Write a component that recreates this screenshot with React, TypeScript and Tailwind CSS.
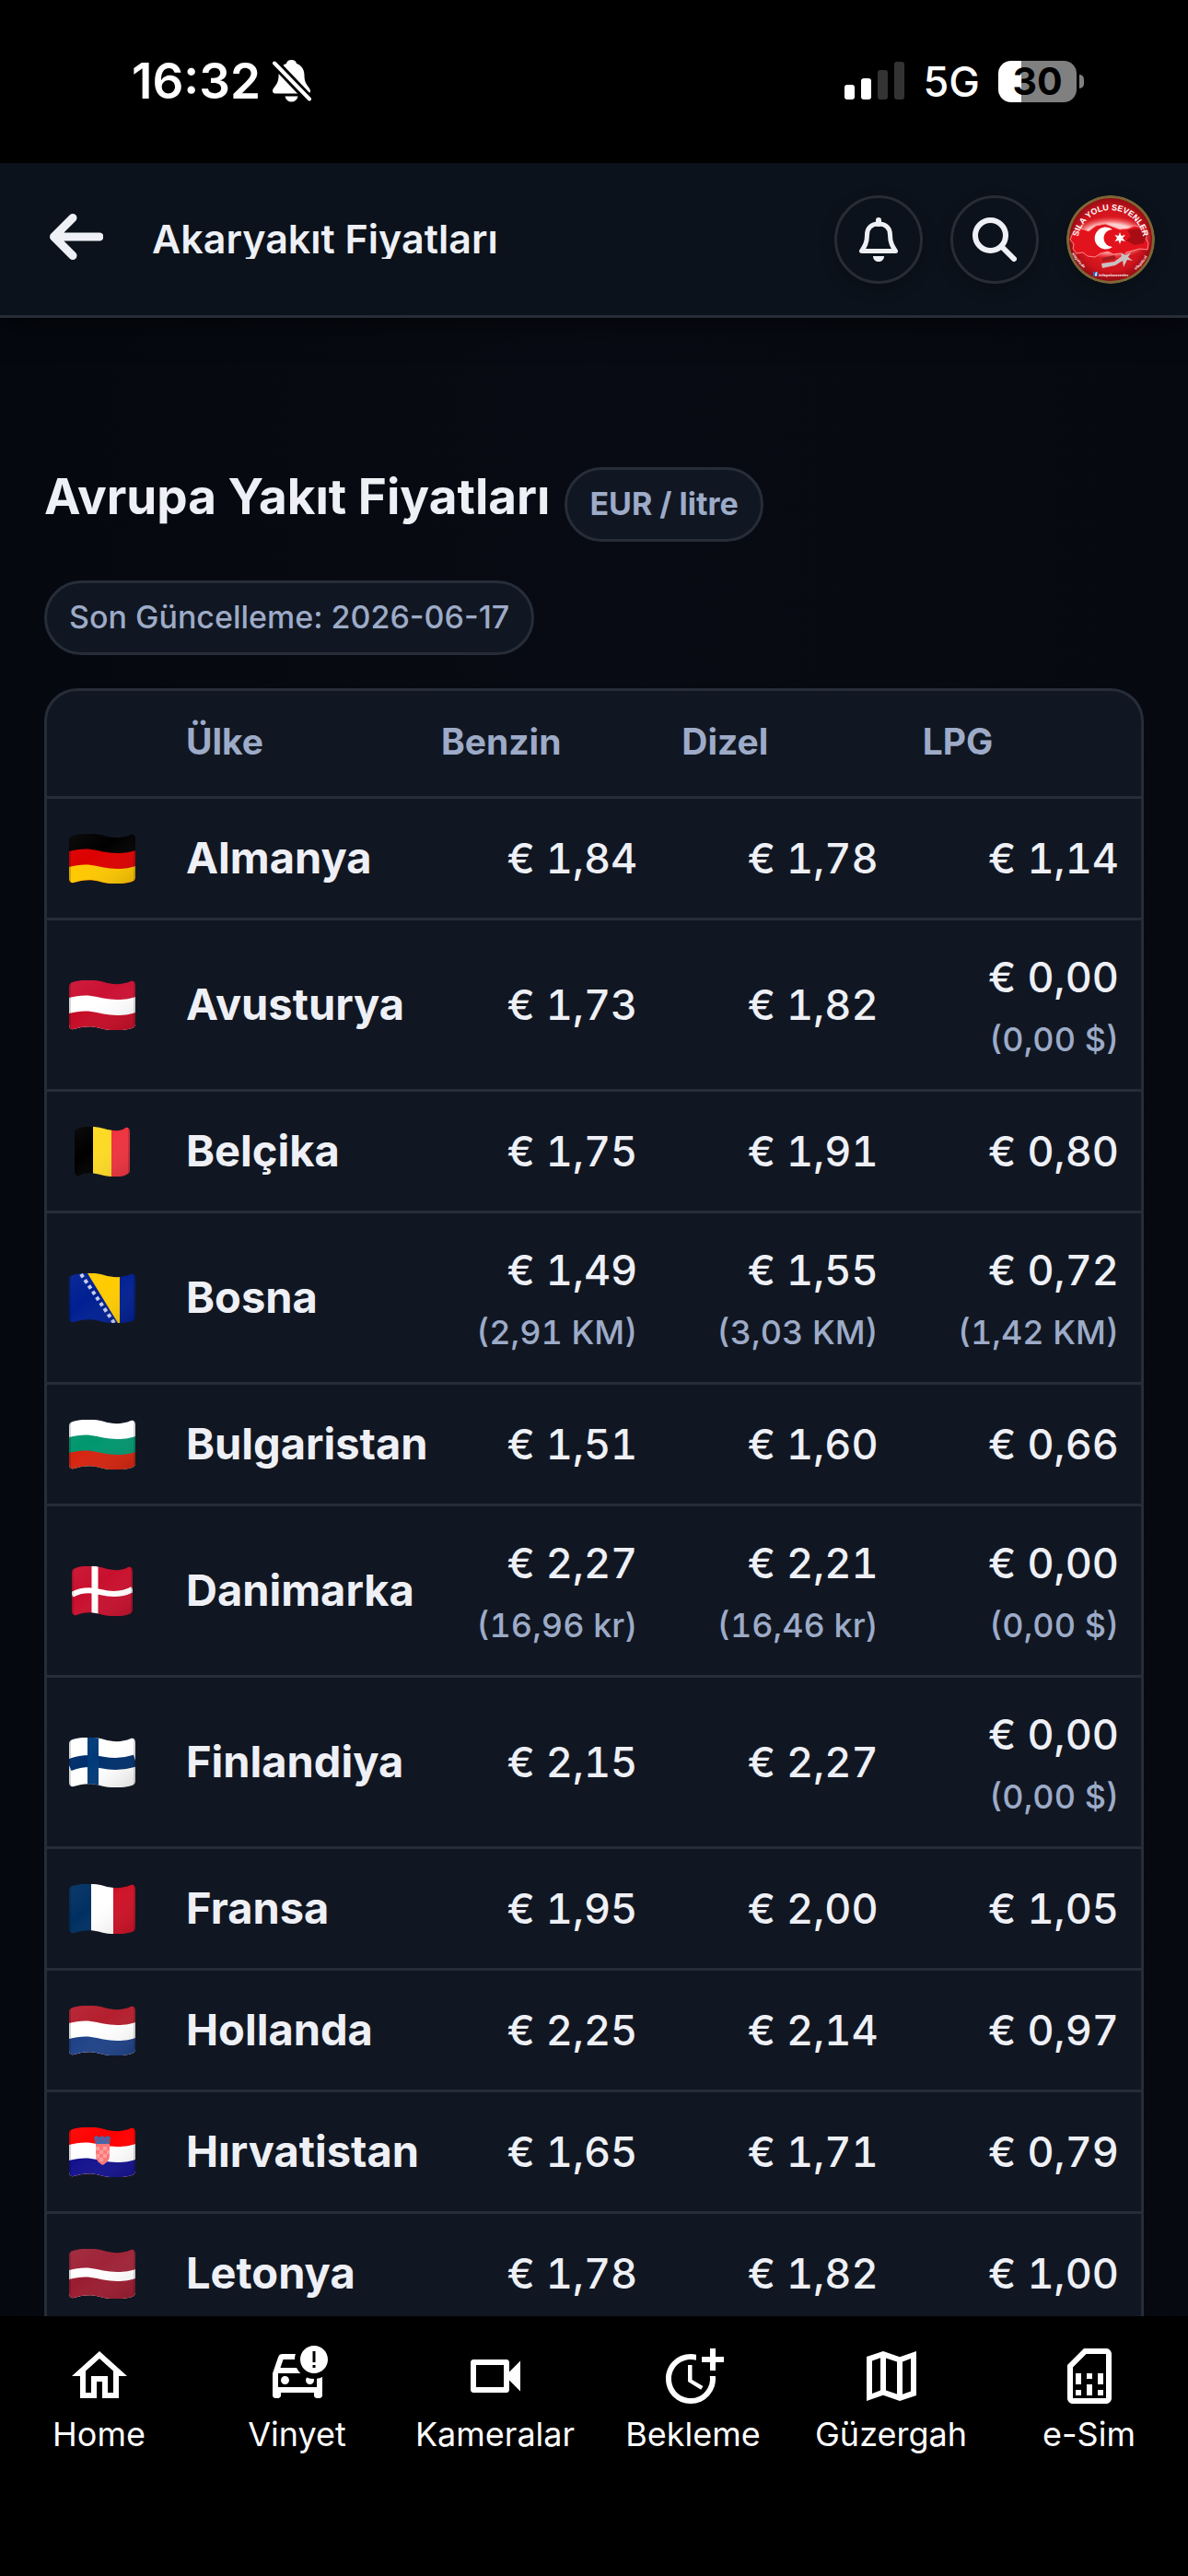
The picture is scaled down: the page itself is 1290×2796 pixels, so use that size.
import React, { useId } from "react";
import {
  MdOutlineCarCrash,
  MdOutlineHome,
  MdOutlineMoreTime,
  MdOutlineSimCard,
  MdOutlineVideocam,
} from "react-icons/md";

type Price = { eur: string; local?: string };
type Row = { flag: string; name: string; prices: [Price, Price, Price] };

const p = (eur: string, local?: string): Price => ({ eur, local });

const rows: Row[] = [
  { flag: "de", name: "Almanya", prices: [p("1,84"), p("1,78"), p("1,14")] },
  { flag: "at", name: "Avusturya", prices: [p("1,73"), p("1,82"), p("0,00", "0,00 $")] },
  { flag: "be", name: "Belçika", prices: [p("1,75"), p("1,91"), p("0,80")] },
  { flag: "ba", name: "Bosna", prices: [p("1,49", "2,91 KM"), p("1,55", "3,03 KM"), p("0,72", "1,42 KM")] },
  { flag: "bg", name: "Bulgaristan", prices: [p("1,51"), p("1,60"), p("0,66")] },
  { flag: "dk", name: "Danimarka", prices: [p("2,27", "16,96 kr"), p("2,21", "16,46 kr"), p("0,00", "0,00 $")] },
  { flag: "fi", name: "Finlandiya", prices: [p("2,15"), p("2,27"), p("0,00", "0,00 $")] },
  { flag: "fr", name: "Fransa", prices: [p("1,95"), p("2,00"), p("1,05")] },
  { flag: "nl", name: "Hollanda", prices: [p("2,25"), p("2,14"), p("0,97")] },
  { flag: "hr", name: "Hırvatistan", prices: [p("1,65"), p("1,71"), p("0,79")] },
  { flag: "lv", name: "Letonya", prices: [p("1,78"), p("1,82"), p("1,00")] },
];

/* A stripe that fills everything below a waving line starting at height y. */
const wave = (y: number) =>
  `M0 ${y}C8 ${y - 2} 16 ${y - 3} 24 ${y - 2}S42 ${y + 2} 52 ${y + 2}S66 ${y + 1} 72 ${y - 1}V60H0Z`;

function Stripes({ colors, stops }: { colors: string[]; stops: number[] }) {
  return (
    <>
      <rect width="72" height="54" fill={colors[0]} />
      {stops.map((y, i) => (
        <path key={y} d={wave(y)} fill={colors[i + 1]} />
      ))}
    </>
  );
}

function FlagArt({ code }: { code: string }) {
  switch (code) {
    case "de":
      return <Stripes colors={["#000000", "#dd0000", "#ffc800"]} stops={[19, 36]} />;
    case "at":
      return <Stripes colors={["#cb1134", "#ffffff", "#c60c26"]} stops={[19, 36]} />;
    case "bg":
      return <Stripes colors={["#ffffff", "#00966e", "#d62410"]} stops={[19, 36]} />;
    case "nl":
      return <Stripes colors={["#b41f2e", "#ffffff", "#1f4288"]} stops={[19, 36]} />;
    case "lv":
      return <Stripes colors={["#9f2438", "#ffffff", "#9b1c30"]} stops={[23, 33]} />;
    case "hr":
      return (
        <>
          <Stripes colors={["#ff0000", "#ffffff", "#14128f"]} stops={[19, 36]} />
          <path d="M29 17h15v14c0 5-4 8-7.500 10-3.500-2-7.500-5-7.500-10z" fill="#ff7676" />
          <path d="M29 21h4v4h-4zM37 21h4v4h-4zM33 25h4v4h-4zM41 25h3v4h-3zM29 29h4v4h-4zM37 29h4v4h-4zM33 33h4v4h-4z" fill="#ff9c9c" />
          <path d="M27 11l3-2 3 2 3-2 3 2 3-2 3 2-1 7H29z" fill="#4665a8" />
          <path d="M30 12h2v3h-2zM36 11h2v3h-2zM41 13h2v3h-2z" fill="#8d4a77" />
        </>
      );
    case "be":
      return (
        <>
          <rect x="6" width="20" height="54" fill="#000000" />
          <rect x="26" width="20" height="54" fill="#fdda24" />
          <rect x="46" width="20" height="54" fill="#ef3340" />
        </>
      );
    case "fr":
      return (
        <>
          <rect width="24" height="54" fill="#003062" />
          <rect x="24" width="24" height="54" fill="#ffffff" />
          <rect x="48" width="24" height="54" fill="#ce1126" />
        </>
      );
    case "ba":
      return (
        <>
          <rect width="72" height="54" fill="#001f92" />
          <path d="M20 0H55V54H53Z" fill="#ffcb00" />
          <path d="M13 1L49 54" stroke="#c3cdea" strokeWidth="4" strokeDasharray="4 3.500" />
        </>
      );
    case "dk":
      return (
        <>
          <rect x="3" width="66" height="54" fill="#c8102e" />
          <path d="M3 31C12 26 22 25 34 28S58 31 69 25" stroke="#ffffff" strokeWidth="6" fill="none" />
          <path d="M28 0V54" stroke="#ffffff" strokeWidth="7" />
        </>
      );
    default:
      return (
        <>
          <rect width="72" height="54" fill="#ffffff" />
          <path d="M0 30C12 25 22 24 36 27S60 29 72 25" stroke="#002f6c" strokeWidth="13" fill="none" />
          <path d="M26 0V54" stroke="#003a78" strokeWidth="12" />
        </>
      );
  }
}

function Flag({ code, label }: { code: string; label: string }) {
  const id = useId();
  const x0 = code === "be" ? 6 : code === "dk" ? 3 : 0;
  const x1 = 72 - x0;
  return (
    <svg viewBox="0 0 72 54" className="h-[54px] w-[72px]" role="img" aria-label={label}>
      <defs>
        <clipPath id={`${id}c`}>
          <path
            d={`M${x0} 7Q${x0} 3 ${x0 + 4} 2C14 -1 28 -1 38 2S58 5 ${x1 - 5} 1Q${x1} 0 ${x1} 6V47Q${x1} 51 ${x1 - 4} 52C58 55 44 55 34 52S14 50 ${x0 + 5} 53Q${x0} 54 ${x0} 48Z`}
          />
        </clipPath>
        <linearGradient id={`${id}g`} x1="0" y1="0" x2="1" y2="1">
          <stop offset="0" stopColor="#ffffff" stopOpacity="0.05" />
          <stop offset="0.4" stopColor="#ffffff" stopOpacity="0" />
          <stop offset="1" stopColor="#000000" stopOpacity="0.14" />
        </linearGradient>
      </defs>
      <g clipPath={`url(#${id}c)`}>
        <FlagArt code={code} />
        <rect width="72" height="54" fill={`url(#${id}g)`} />
        <path d={`M${x1 - 1} 0V54M${x0 + 1} 0V54`} stroke="#000000" strokeOpacity="0.16" strokeWidth="2" />
      </g>
    </svg>
  );
}

function StatusBar() {
  return (
    <div className="flex h-[177px] shrink-0 items-start justify-between bg-black pt-[58px] pr-[113px] pl-[143px] text-white">
      <div className="flex h-[60px] items-center gap-[13px]">
        <span className="text-[53px] leading-none font-semibold">16:32</span>
        <svg viewBox="0 0 42 46" className="h-[46px] w-[42px]" aria-label="Sessiz" role="img">
          <path
            d="M20.500 0c-3 0-5 1.500-5.500 4C8 6.500 6.500 12 6.500 18 6.500 27 0 30 0 33.500 0 35.500 1 36.500 3 36.500h35c2 0 3-1 3-3 0-3.500-6.500-6.500-6.500-15.500 0-6-1.500-11.500-8.500-14-.5-2.500-2.500-4-5.500-4z"
            fill="#fff"
          />
          <path d="M13.500 39.500h14c-1 4-3.500 6-7 6s-6-2-7-6z" fill="#fff" />
          <path d="M-2 -1L44 47" stroke="#000" strokeWidth="10" />
          <path d="M2 3.500L40 42.500" stroke="#fff" strokeWidth="4" strokeLinecap="round" />
        </svg>
      </div>
      <div className="flex h-[60px] items-center">
        <svg viewBox="0 0 66 42" className="h-[42px] w-[66px]" aria-label="Sinyal" role="img">
          <rect x="0" y="25" width="11" height="16" rx="3" fill="#fff" />
          <rect x="18" y="18" width="11" height="23" rx="3" fill="#fff" />
          <rect x="36" y="9" width="11" height="32" rx="3" fill="#333" />
          <rect x="54" y="0" width="11" height="41" rx="3" fill="#333" />
        </svg>
        <span className="ml-5 text-[45px] leading-none font-medium">5G</span>
        <span className="ml-5 flex items-center gap-[3px]">
          <span className="flex h-[45px] w-[85px] items-center justify-center rounded-[14px] bg-[linear-gradient(90deg,#fff_30%,#808080_30%)] text-[41px] leading-none font-bold text-black">
            30
          </span>
          <span className="h-[15px] w-[5px] rounded-r-full bg-[#808080]" />
        </span>
      </div>
    </div>
  );
}

function Avatar() {
  return (
    <svg viewBox="0 0 96 96" className="size-24 shrink-0 rounded-full" role="img" aria-label="Sıla Yolu Sevenler">
      <defs>
        <radialGradient id="avatarBg" cx="0.5" cy="0.5" r="0.55">
          <stop offset="0" stopColor="#f3222a" />
          <stop offset="0.7" stopColor="#cf131c" />
          <stop offset="1" stopColor="#7d0b10" />
        </radialGradient>
        <radialGradient id="avatarGlow" cx="0.5" cy="0.5" r="0.5">
          <stop offset="0.65" stopColor="#ffd0d0" stopOpacity="1" />
          <stop offset="1" stopColor="#ff5a5a" stopOpacity="0" />
        </radialGradient>
        <path id="avatarArc" d="M12 52A36 36 0 0 1 84 52" />
        <path id="avatarLeft" d="M6 63Q12 74 24 83" />
        <path id="avatarRight" d="M75 81Q86 73 90 60" />
      </defs>
      <circle cx="48" cy="48" r="48" fill="#7d6636" />
      <circle cx="48" cy="48" r="45" fill="url(#avatarBg)" />
      <ellipse cx="48" cy="46" rx="45" ry="23" fill="url(#avatarGlow)" />
      <path
        d="M7 41l5-5 7 1 5 2 8-6 10-2 8 3 8 3 9-1 7-3 8 2 5 6-1 6 3 5-1 7-8-1-8 2-7 2-3 4-4-3-7 1-6-3-8 2-6 4-8-1-5-4-7 1-4-5 1-5-4-5z"
        fill="#e3131d"
        stroke="#f88"
        strokeWidth="1"
      />
      <path d="M66 38l12-2 9 7-3 9-10 2-9-5 5-5z" fill="#a80d14" />
      <path d="M50 37a12 12 0 1 0 0 19 9.500 9.500 0 1 1 0-19z" fill="#fff" />
      <path d="M58 40l1.500 4 4.500-1-3 3.500 3 3.500-4.500-1-1.500 4-1.500-4-4 1 2.500-3.500-2.500-3.500 4 1z" fill="#fff" />
      <path d="M38 74l14-2 8-6-1-4 5 3 6-3-3 5 5 4-6-1-4 8-1-7-8 5-14 3z" fill="#c9c1c1" />
      <path d="M39 70l14-3" stroke="#a51b20" strokeWidth="4" />
      <g fill="#fff" fontFamily="'Liberation Sans', sans-serif" fontWeight="700">
        <text fontSize="9">
          <textPath href="#avatarArc" startOffset="50%" textAnchor="middle">
            SILA YOLU SEVENLER
          </textPath>
        </text>
        <text fontSize="4">
          <textPath href="#avatarLeft">silayolu.de</textPath>
        </text>
        <text fontSize="4">
          <textPath href="#avatarRight">silayolu.nl</textPath>
        </text>
        <text x="35" y="88" fontSize="4">
          /silayolusevenler
        </text>
      </g>
      <rect x="29" y="83" width="5" height="5" fill="#3b62b5" />
      <path d="M32 88v-4h1.500M31 86h2" stroke="#fff" strokeWidth="1" fill="none" />
    </svg>
  );
}

const roundButton =
  "flex size-24 shrink-0 items-center justify-center rounded-full border-3 border-[#272c35] text-[#eef0f6] shadow-[0_6px_18px_rgba(0,0,0,0.2)]";

function Header() {
  return (
    <header className="relative z-10 flex h-[168px] shrink-0 items-center border-b-3 border-[#272d37] bg-[#0b121b] pr-9 pl-[54px] shadow-[0_6px_30px_rgba(0,0,0,0.6)]">
      <button type="button" aria-label="Geri" className="mr-[53px] text-[#eef0f6]">
        <svg viewBox="0 0 58 50" className="mb-[5px] h-[50px] w-[58px]" fill="none">
          <path d="M25 4.500L4.500 25 25 45.500M5 25h49" stroke="currentColor" strokeWidth="9" strokeLinecap="round" strokeLinejoin="round" />
        </svg>
      </button>
      <h1 className="min-w-0 flex-1 truncate text-[43px] leading-none font-semibold">Akaryakıt Fiyatları</h1>
      <div className="flex items-center gap-[30px]">
        <button type="button" aria-label="Bildirimler" className={roundButton}>
          <svg viewBox="0 0 42 48" className="h-[48px] w-[42px]" fill="none">
            <path d="M21 3v4" stroke="currentColor" strokeWidth="6" strokeLinecap="round" />
            <path
              d="M21 7c-8 0-12.500 5-12.500 12 0 9-3 13-6 17.500h37c-3-4.500-6-8.500-6-17.500 0-7-4.500-12-12.500-12z"
              stroke="currentColor"
              strokeWidth="5"
              strokeLinecap="round"
              strokeLinejoin="round"
            />
            <path d="M15 42h12c0 4-3 6-6 6s-6-2-6-6z" fill="currentColor" />
          </svg>
        </button>
        <button type="button" aria-label="Ara" className={roundButton}>
          <svg viewBox="0 0 48 48" className="size-12" fill="none" stroke="currentColor" strokeWidth="6" strokeLinecap="round">
            <circle cx="19.500" cy="19.500" r="16.500" />
            <path d="M31.500 31.500L45 45" />
          </svg>
        </button>
        <button type="button" aria-label="Profil" className="rounded-full shadow-[0_6px_18px_rgba(0,0,0,0.2)]">
          <Avatar />
        </button>
      </div>
    </header>
  );
}

function Pill({ children, className }: { children: React.ReactNode; className: string }) {
  return (
    <span
      className={`inline-flex h-[81px] items-center rounded-full border-3 border-[#272d38] bg-[#111722] px-6 pb-0.5 text-[34px] leading-none text-[#9dabc8] ${className}`}
    >
      {children}
    </span>
  );
}

function PriceTable() {
  return (
    <div className="mt-9 rounded-[36px] border-3 border-[#272d38] bg-[#111722] pb-12">
      <table className="w-full table-fixed border-separate border-spacing-0">
        <colgroup>
          <col className="w-[127px]" />
          <col />
          <col className="w-[22%]" />
          <col className="w-[22%]" />
          <col className="w-[22%]" />
        </colgroup>
        <thead>
          <tr className="h-[117px] text-left text-[39px] leading-none text-[#9dabc8]">
            <td className="border-b-3 border-[#272d38]" />
            {["Ülke", "Benzin", "Dizel", "LPG"].map((h) => (
              <th key={h} scope="col" className="border-b-3 border-[#272d38] px-6 pb-1.5 font-bold">
                {h}
              </th>
            ))}
          </tr>
        </thead>
        <tbody>
          {rows.map((row) => (
            <tr key={row.name}>
              <td className="border-b-3 border-[#272d38] px-6 py-[27px]">
                <span className="flex h-[75px] items-center">
                  <Flag code={row.flag} label={row.name} />
                </span>
              </td>
              <th scope="row" className="border-b-3 border-[#272d38] px-6 pb-0.5 text-left text-[47px] leading-none font-bold whitespace-nowrap">
                {row.name}
              </th>
              {row.prices.map((price, i) => (
                <td key={i} className="border-b-3 border-[#272d38] px-6 py-[27px] text-right font-medium whitespace-nowrap tabular-nums">
                  <div className="text-[45px] leading-[69px]">€ {price.eur}</div>
                  {price.local && <div className="mt-1.5 text-[36px] leading-[54px] text-[#9dabc8]">({price.local})</div>}
                </td>
              ))}
            </tr>
          ))}
        </tbody>
      </table>
    </div>
  );
}

function MapIcon() {
  return (
    <svg viewBox="0 0 24 24" fill="currentColor" className="size-[72px]">
      <path
        fillRule="evenodd"
        d="M3 5l6-2 6 2.100L21 3v16l-6 2-6-2.100L3 21zM10 5.470l4 1.400v11.660l-4-1.400zM5 6.460l3-1.010v11.700l-3 1.160zM19 17.540l-3 1.010V6.860l3-1.160z"
      />
    </svg>
  );
}

const tabs = [
  { label: "Home", icon: <MdOutlineHome className="size-[72px]" /> },
  { label: "Vinyet", icon: <MdOutlineCarCrash className="size-[72px]" /> },
  { label: "Kameralar", icon: <MdOutlineVideocam className="size-[72px]" /> },
  { label: "Bekleme", icon: <MdOutlineMoreTime className="size-[72px]" /> },
  { label: "Güzergah", icon: <MapIcon /> },
  { label: "e-Sim", icon: <MdOutlineSimCard className="size-[72px]" /> },
];

function TabBar() {
  return (
    <nav className="grid h-[282px] shrink-0 grid-cols-6 items-start bg-black pt-[29px] text-white">
      {tabs.map((tab) => (
        <a key={tab.label} href="#" className="flex flex-col items-center gap-1.5">
          {tab.icon}
          <span className="text-[36px] leading-[42px]">{tab.label}</span>
        </a>
      ))}
    </nav>
  );
}

export default function App() {
  return (
    <div className="flex h-screen flex-col overflow-hidden bg-[#070a12] font-['Inter','Noto_Sans',sans-serif] text-[#eef0f6]">
      <StatusBar />
      <Header />
      <main className="min-h-0 flex-1 overflow-y-auto bg-[linear-gradient(90deg,#05080f,#080b13_50%,#070911)] px-12 pt-[162px] [scrollbar-width:none]">
        <div className="flex items-center gap-4">
          <h2 className="pb-4 text-[53px] leading-none font-bold">Avrupa Yakıt Fiyatları</h2>
          <Pill className="font-bold">EUR / litre</Pill>
        </div>
        <div className="mt-[42px] flex">
          <Pill className="font-medium">Son Güncelleme: 2026-06-17</Pill>
        </div>
        <PriceTable />
      </main>
      <TabBar />
    </div>
  );
}
